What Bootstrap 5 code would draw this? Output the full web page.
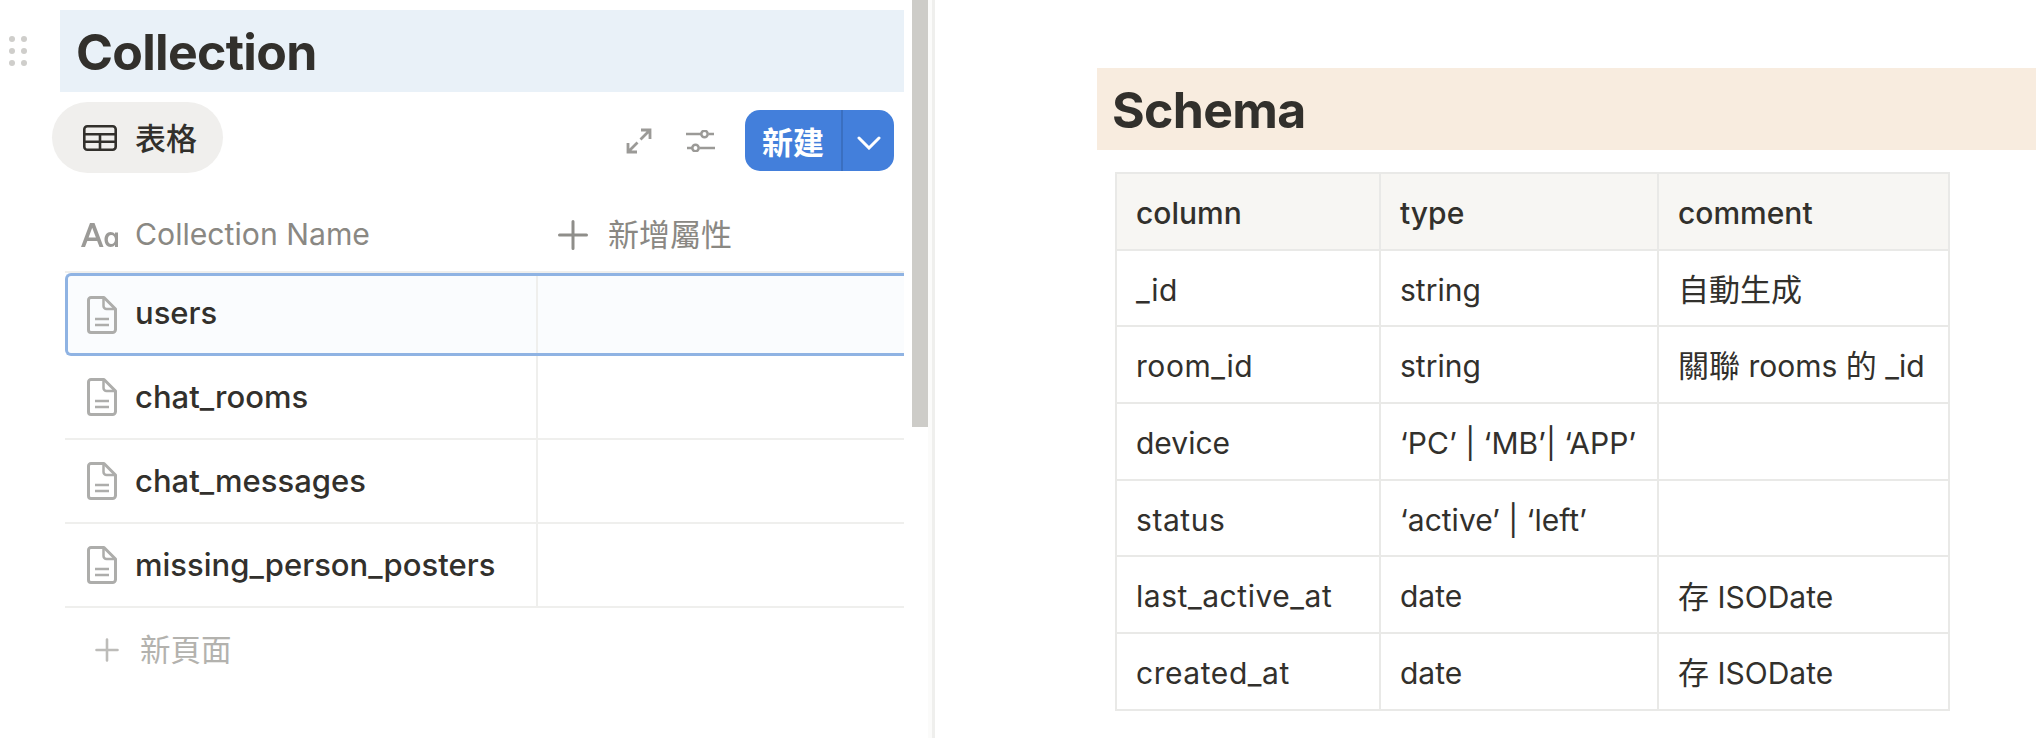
<!DOCTYPE html>
<html lang="zh-Hant">
<head>
<meta charset="utf-8">
<title>Collection / Schema</title>
<link href="https://cdn.jsdelivr.net/npm/bootstrap@5.3.0/dist/css/bootstrap.min.css" rel="stylesheet">
<style>
html,body{height:100%;overflow:hidden;background:#fff}
body{font-family:Inter,"Noto Sans CJK TC",sans-serif;color:#32302c}
.pane-left{width:935px;height:738px;border-right:3px solid #efefed;position:relative;flex:none}
.pane-right{height:738px;padding-top:68px}
.scroll-thumb{position:absolute;left:912px;top:0;width:16px;height:427px;background:#cdccc8}
.scroll-gutter{position:absolute;left:928px;top:0;width:4px;height:738px;background:#fbfbfa}
.head-line{padding-top:10px}
.grip{width:60px;padding-left:8px}
.band{height:82px;font-size:50px;font-weight:700;line-height:85px;letter-spacing:-.7px;color:#32302c;margin:0}
.band-blue{width:844px;background:#e9f1f8;padding-left:16px}
.band-tan{margin-left:162px;background:#f8ecdf;padding-left:15px}
.toolbar{margin:10px 0 0 52px;width:842px;height:71px}
.tab-pill{width:171px;height:71px;border-radius:36px;background:#f0efed;padding-left:31px;font-size:31px;font-weight:500;gap:18px}
.tab-label{padding-top:4px}
.tools{gap:34px;margin-right:30px;padding-top:6px}
.new-split{width:149px;height:61px;margin-top:8px;border-radius:15px;background:#437fdb;color:#fff;font-size:31px;font-weight:700}
.new-main{width:98px;padding-left:17px;line-height:65px;border-right:2px solid #3a6fc0}
.new-arrow{flex:1;padding-top:5px}
.db{margin-left:65px;width:839px}
.db-head{height:100px;padding-top:26px;border-bottom:2px solid #efefed;color:#8a8883;font-size:30.2px}
.db-head-cjk{font-size:31px}
.db-cell1{width:473px;flex:none}
.db-row{height:84px;border-bottom:2px solid #efefed;font-size:31px;font-weight:450}
.db-row .db-cell1{border-right:2px solid #efefed;height:100%}
.db-row.active{height:83px;background:#fafcfe;border:3px solid #8fb3e3;border-right:0;border-radius:6px 0 0 6px}
.ico-doc{margin-left:22px;margin-right:18px;flex:none}
.active .ico-doc{margin-left:19px}
.active .db-cell1{width:470px}
.active .db-cell1 span{margin-bottom:2px}
.ico-aa{margin-left:16px;margin-right:17px;flex:none}
.ico-plus{margin-left:20px;margin-right:20px;flex:none}
.new-page{height:84px;margin-left:30px;color:#b3b2ae;font-size:30.5px;gap:21px}
.schema{width:833px;margin:22px 0 0 180px;border-collapse:collapse;table-layout:fixed;font-size:30px;color:#32302c}
.schema td,.schema th{height:76.7px;padding:4px 19px 0;border:2.5px solid #e9e9e7;font-weight:400;vertical-align:middle;white-space:nowrap;background:#fff;color:#32302c}
.schema th{background:#f7f6f3;font-weight:500}
.ident{letter-spacing:.55px}
.cjk-run{font-size:31px}
</style>
</head>
<body>
<div class="d-flex">
  <div class="pane-left">
    <div class="head-line d-flex align-items-center">
      <div class="grip">
        <svg width="24" height="32" viewBox="0 0 24 32" fill="#cfcecb"><circle cx="4" cy="4" r="3"/><circle cx="16" cy="4" r="3"/><circle cx="4" cy="16" r="3"/><circle cx="16" cy="16" r="3"/><circle cx="4" cy="28" r="3"/><circle cx="16" cy="28" r="3"/></svg>
      </div>
      <h1 class="band band-blue">Collection</h1>
    </div>

    <div class="toolbar d-flex justify-content-between">
      <div class="tab-pill d-flex align-items-center">
        <svg width="34" height="26" viewBox="0 0 34 26" fill="none" stroke="#32302c" stroke-width="2.6"><rect x="1.3" y="1.3" width="31.4" height="23.4" rx="3"/><path d="M1.3 9.2H32.7M1.3 16.8H32.7M17 9.2V24.7"/></svg>
        <span class="tab-label">表格</span>
      </div>
      <div class="d-flex">
        <div class="tools d-flex align-items-center">
          <svg width="26" height="26" viewBox="0 0 26 26" fill="none" stroke="#9b9a97" stroke-width="2.8"><path d="M15 2H24V11M24 2L14.500 11.500M11.500 14.500L2 24M2 15V24H11"/></svg>
          <svg width="29" height="22" viewBox="0 0 29 22" fill="none" stroke="#9b9a97" stroke-width="2.5"><path d="M0 4H15M22.500 4H28M1 18H6M13.500 18H29"/><circle cx="18.500" cy="4" r="3.200"/><circle cx="9.500" cy="18" r="3.200"/></svg>
        </div>
        <div class="new-split d-flex">
          <div class="new-main">新建</div>
          <div class="new-arrow d-flex align-items-center justify-content-center">
            <svg width="24" height="14" viewBox="0 0 24 14" fill="none" stroke="#fff" stroke-width="3" stroke-linecap="round"><path d="M2 2L12 12L22 2"/></svg>
          </div>
        </div>
      </div>
    </div>

    <div class="db">
      <div class="db-head d-flex align-items-center">
        <div class="db-cell1 d-flex align-items-center">
          <svg class="ico-aa" width="37" height="24" viewBox="0 0 37 24" fill="#9b9a97"><path d="M0 24L9 0H13.500L22.500 24H18.500L16.200 18H6.300L4 24ZM7.600 14.600H14.900L11.200 4.800Z"/><path fill-rule="evenodd" d="M29.500 9C31.500 9 33 9.800 34 11.200V9.500H37V24H34V21.800C33 23.200 31.500 24 29.500 24C26 24 23.500 21 23.500 16.500C23.500 12 26 9 29.500 9ZM30.300 12C28.200 12 26.800 13.800 26.800 16.500C26.800 19.200 28.200 21 30.300 21C32.500 21 34 19.200 34 16.500C34 13.800 32.500 12 30.300 12Z"/></svg>
          <span>Collection Name</span>
        </div>
        <svg class="ico-plus" width="30" height="30" viewBox="0 0 30 30" stroke="#8f8e8a" stroke-width="3" stroke-linecap="round"><path d="M15 1.500V28.500M1.500 15H28.500"/></svg>
        <span class="db-head-cjk">新增屬性</span>
      </div>
      <div class="db-row active d-flex align-items-center">
        <div class="db-cell1 d-flex align-items-center">
          <svg class="ico-doc" width="30" height="38" viewBox="0 0 30 38" fill="none" stroke="#adadab" stroke-width="3" stroke-linejoin="round"><path d="M4 1.500H17L28.500 13V33.500A3 3 0 0 1 25.500 36.500H4A2.500 2.500 0 0 1 1.500 34V4A2.500 2.500 0 0 1 4 1.500Z"/><path d="M16.500 1.500V10A3 3 0 0 0 19.500 13H28.500M8 23H22M8 29H22" stroke-width="2.500"/></svg>
          <span>users</span>
        </div>
      </div>
      <div class="db-row d-flex align-items-center">
        <div class="db-cell1 d-flex align-items-center">
          <svg class="ico-doc" width="30" height="38" viewBox="0 0 30 38" fill="none" stroke="#adadab" stroke-width="3" stroke-linejoin="round"><path d="M4 1.500H17L28.500 13V33.500A3 3 0 0 1 25.500 36.500H4A2.500 2.500 0 0 1 1.500 34V4A2.500 2.500 0 0 1 4 1.500Z"/><path d="M16.500 1.500V10A3 3 0 0 0 19.500 13H28.500M8 23H22M8 29H22" stroke-width="2.500"/></svg>
          <span>chat_rooms</span>
        </div>
      </div>
      <div class="db-row d-flex align-items-center">
        <div class="db-cell1 d-flex align-items-center">
          <svg class="ico-doc" width="30" height="38" viewBox="0 0 30 38" fill="none" stroke="#adadab" stroke-width="3" stroke-linejoin="round"><path d="M4 1.500H17L28.500 13V33.500A3 3 0 0 1 25.500 36.500H4A2.500 2.500 0 0 1 1.500 34V4A2.500 2.500 0 0 1 4 1.500Z"/><path d="M16.500 1.500V10A3 3 0 0 0 19.500 13H28.500M8 23H22M8 29H22" stroke-width="2.500"/></svg>
          <span>chat_messages</span>
        </div>
      </div>
      <div class="db-row d-flex align-items-center">
        <div class="db-cell1 d-flex align-items-center">
          <svg class="ico-doc" width="30" height="38" viewBox="0 0 30 38" fill="none" stroke="#adadab" stroke-width="3" stroke-linejoin="round"><path d="M4 1.500H17L28.500 13V33.500A3 3 0 0 1 25.500 36.500H4A2.500 2.500 0 0 1 1.500 34V4A2.500 2.500 0 0 1 4 1.500Z"/><path d="M16.500 1.500V10A3 3 0 0 0 19.500 13H28.500M8 23H22M8 29H22" stroke-width="2.500"/></svg>
          <span>missing_person_posters</span>
        </div>
      </div>
      <div class="new-page d-flex align-items-center">
        <svg width="24" height="24" viewBox="0 0 24 24" stroke="#bdbcb9" stroke-width="2.600" stroke-linecap="round"><path d="M12 1.500V22.500M1.500 12H22.500"/></svg>
        <span>新頁面</span>
      </div>
    </div>

    <div class="scroll-thumb"></div>
    <div class="scroll-gutter"></div>
  </div>

  <div class="pane-right flex-grow-1">
    <h2 class="band band-tan">Schema</h2>
    <table class="schema">
      <colgroup><col style="width:264px"><col style="width:278px"><col style="width:291px"></colgroup>
      <tr><th>column</th><th>type</th><th>comment</th></tr>
      <tr><td class="ident">_id</td><td>string</td><td><span class="cjk-run">自動生成</span></td></tr>
      <tr><td class="ident">room_id</td><td>string</td><td><span class="cjk-run">關聯</span> rooms <span class="cjk-run">的</span> _id</td></tr>
      <tr><td>device</td><td>‘PC’ | ‘MB’| ‘APP’</td><td></td></tr>
      <tr><td class="ident">status</td><td>‘active’ | ‘left’</td><td></td></tr>
      <tr><td class="ident">last_active_at</td><td>date</td><td><span class="cjk-run">存</span> ISODate</td></tr>
      <tr><td class="ident">created_at</td><td>date</td><td><span class="cjk-run">存</span> ISODate</td></tr>
    </table>
  </div>
</div>
<script src="https://cdn.jsdelivr.net/npm/bootstrap@5.3.0/dist/js/bootstrap.bundle.min.js"></script>
</body>
</html>
